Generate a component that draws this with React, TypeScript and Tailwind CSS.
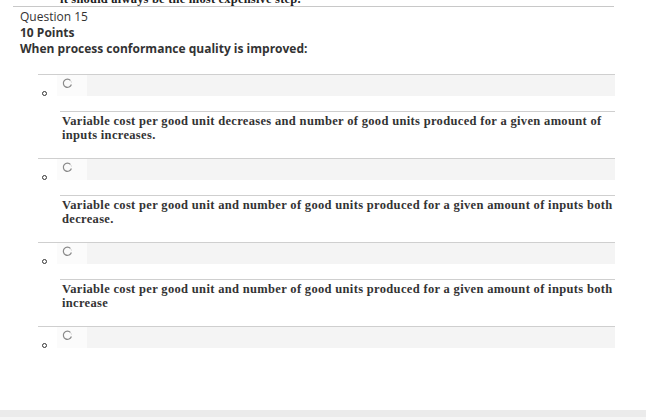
import React from "react";

type Choice = { text: string };

const choices: Choice[] = [
  {
    text: "Variable cost per good unit decreases and number of good units produced for a given amount of inputs increases.",
  },
  {
    text: "Variable cost per good unit and number of good units produced for a given amount of inputs both decrease.",
  },
  {
    text: "Variable cost per good unit and number of good units produced for a given amount of inputs both increase",
  },
  { text: "" },
];

// unchecked radio, drawn open on the upper right like the old native control
const Radio = () => (
  <svg width="11" height="11" viewBox="0 0 11 11" className="block">
    <path
      d="M8.6 2.6 A4.1 4.1 0 1 0 9.4 6.5"
      fill="none"
      stroke="#8a8a8a"
      strokeWidth="1.2"
    />
    <path
      d="M8.2 2.2 A4.1 4.1 0 0 1 9.5 4.6"
      fill="none"
      stroke="#d6d6d6"
      strokeWidth="1"
    />
  </svg>
);

function ChoiceBlock({ choice }: { choice: Choice }) {
  return (
    <li className="h-[84px]">
      <div className="ml-[38px] w-[577px] border-t border-[#cfcfcf]">
        <div className="flex h-[21px]">
          <div className="relative w-[19px]">
            <span className="absolute left-[4px] top-[16px] h-[5px] w-[5px] rounded-full border border-[#333]" />
          </div>
          <div className="flex w-[30px] items-start bg-[#fbfbfb] pl-[5px] pt-[3px]">
            <Radio />
          </div>
          <div className="flex-1 bg-[#f4f4f4]" />
        </div>
      </div>
      {choice.text && (
        <div className="ml-[60px] mt-[15px] w-[555px] border-t border-[#cfcfcf] pl-[2px] pt-[2px] font-['Liberation_Serif',serif] text-[12.5px] font-bold leading-[14px] tracking-[0.33px] text-[#333]">
          {choice.text}
        </div>
      )}
    </li>
  );
}

export default function App() {
  return (
    <div className="relative h-[420px] w-[646px] overflow-hidden bg-white font-['Open_Sans',sans-serif]">
      <div className="relative ml-[13px] h-[7px] w-[601px] border-b border-[#c8c8c8]">
        <span className="absolute left-[47px] top-[-8px] whitespace-nowrap font-['Liberation_Serif',serif] text-[12.5px] font-bold leading-[14px] tracking-[0.2px] text-[#222]">
          it should always be the most expensive step.
        </span>
      </div>
      <div className="px-[20px] pt-[2px] text-[#333]">
        <div className="text-[12px] leading-[16px]">Question 15</div>
        <div className="text-[12px] font-bold leading-[16px]">10 Points</div>
        <div className="text-[12px] font-bold leading-[16px]">
          When process conformance quality is improved:
        </div>
      </div>
      <ul className="mt-[17px]">
        {choices.map((c, i) => (
          <ChoiceBlock key={i} choice={c} />
        ))}
      </ul>
      <div className="absolute bottom-[3px] left-0 h-[7px] w-full bg-[#ebebeb]" />
      <div className="absolute bottom-0 left-0 h-[3px] w-full bg-[#f6f6f6]" />
    </div>
  );
}
